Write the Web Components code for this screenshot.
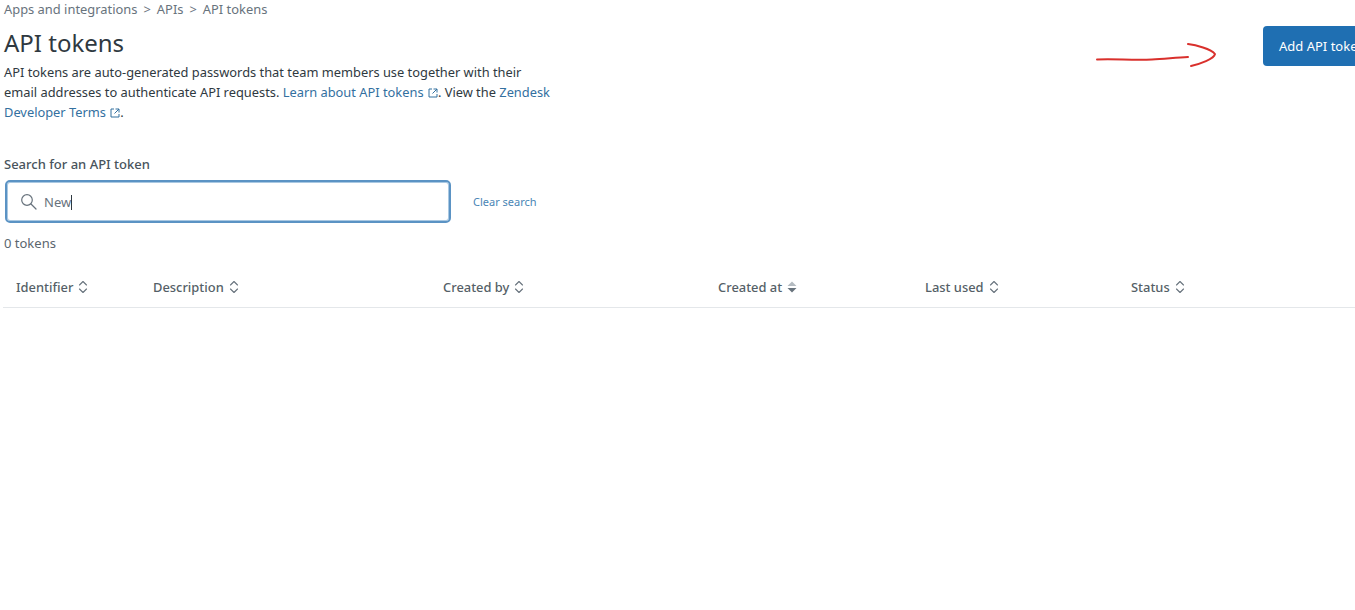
<!DOCTYPE html>
<html>
<head>
<meta charset="utf-8">
<title>API tokens</title>
<style>
  html, body { margin: 0; height: 100%; background: #fff; overflow: hidden; }
  body { font-family: "Noto Sans", "Open Sans", sans-serif; color: #49545c; }
</style>
</head>
<body>
<tokens-page></tokens-page>

<template id="page-tpl">
  <style>
    :host { display: block; width: 1355px; height: 610px; overflow: hidden; padding: 2px 0 0 4px; box-sizing: border-box; }
    .top { display: flex; align-items: flex-start; }
    .intro { width: 556px; flex: none; }
    .arrow { flex: none; margin: 40px 0 0 536px; width: 124px; height: 26px; }
    api-button { margin: 24px 0 0 43px; flex: none; }
    .crumbs { font-size: 12.9px; line-height: 15px; color: #68737d; display: flex; gap: 6px; white-space: nowrap; }
    h1 { margin: 9px 0 0; font-size: 24px; font-weight: 400; line-height: 33px; color: #2f3941; }
    p { margin: 3px 0 0; font-size: 12.85px; line-height: 20px; color: #2f3941; width: 553px; }
    a { color: #33709f; text-decoration: none; }
    .ext { width: 10px; height: 10px; vertical-align: -1px; margin-left: 1px; }
  </style>
  <div class="top">
    <div class="intro">
      <div class="crumbs"><span>Apps and integrations</span><span>&gt;</span><span>APIs</span><span>&gt;</span><span>API tokens</span></div>
      <h1>API tokens</h1>
      <p>API tokens are auto-generated passwords that team members use together with their email addresses to authenticate API requests. <a href="#">Learn about API tokens</a> <svg class="ext" viewBox="0 0 10 10" fill="none" stroke="#33709f" stroke-width="1"><path d="M4 1H1v8h8V6M5.500 1H9v3.500M9 1 4.500 5.500"/></svg>. View the <a href="#">Zendesk</a> <a href="#">Developer Terms</a> <svg class="ext" viewBox="0 0 10 10" fill="none" stroke="#33709f" stroke-width="1"><path d="M4 1H1v8h8V6M5.500 1H9v3.500M9 1 4.500 5.500"/></svg>.</p>
    </div>
    <svg class="arrow" viewBox="0 0 124 26" fill="none" stroke="#d9302c" stroke-width="2" stroke-linecap="round" stroke-linejoin="round">
      <path d="M1 17.500C18 16.500 36 18.500 56 17.500C68 17 80 15.500 92 15"/>
      <path d="M92 2C100 3 115 7 119 12C118 17 104 22 95 24"/>
    </svg>
    <api-button>Add API token</api-button>
  </div>
  <search-box></search-box>
  <token-table></token-table>
</template>

<template id="button-tpl">
  <style>
    :host { display: block; }
    div { width: 108px; height: 40px; box-sizing: border-box; background: #1f6fb2; color: #fff; border-radius: 4px; font-size: 13px; line-height: 40px; padding-left: 16px; white-space: nowrap; overflow: hidden; }
  </style>
  <div><slot></slot></div>
</template>

<template id="search-tpl">
  <style>
    :host { display: block; margin-top: 33px; }
    label { display: block; font-size: 13px; line-height: 18px; font-weight: 500; color: #49545c; }
    .row { display: flex; align-items: center; margin-top: 7px; margin-left: 1px; }
    .field { width: 446px; height: 43px; box-sizing: border-box; border: 2px solid #5b93c4; border-radius: 5px; box-shadow: 0 0 0 1px #a9c8e2 inset; display: flex; align-items: center; padding-left: 13px; gap: 7px; font-size: 13px; color: #68737d; }
    .field svg { width: 17px; height: 17px; flex: none; }
    .caret { display: inline-block; width: 1px; height: 15px; background: #2f3941; vertical-align: -3px; }
    a { margin-left: 22px; font-size: 11px; color: #4a86b5; text-decoration: none; }
    .count { font-size: 13px; line-height: 18px; margin-top: 11px; color: #5b666e; }
  </style>
  <label>Search for an API token</label>
  <div class="row">
    <div class="field">
      <svg viewBox="0 0 17 17" fill="none" stroke="#68737d" stroke-width="1.200"><circle cx="7" cy="7" r="5.300"/><path d="M11 11l5 5" stroke-linecap="round"/></svg>
      <span>New<i class="caret"></i></span>
    </div>
    <a href="#">Clear search</a>
  </div>
  <div class="count">0 tokens</div>
</template>

<template id="table-tpl">
  <style>
    :host { display: grid; box-sizing: border-box; grid-template-columns: 137px 290px 275px 207px 206px 1fr; margin: 14px 0 0 -1px; padding-left: 13px; height: 42px; align-items: center; border-bottom: 1px solid #e4e7ea; }
  </style>
  <sort-head>Identifier</sort-head>
  <sort-head>Description</sort-head>
  <sort-head>Created by</sort-head>
  <sort-head sorted>Created at</sort-head>
  <sort-head>Last used</sort-head>
  <sort-head>Status</sort-head>
</template>

<template id="head-tpl">
  <style>
    :host { display: flex; align-items: center; gap: 5px; font-size: 12.9px; font-weight: 500; color: #555f67; white-space: nowrap; }
    svg { width: 10px; height: 14px; }
  </style>
  <slot></slot>
  <svg viewBox="0 0 10 14" fill="none" stroke="#68737d" stroke-width="1.100" stroke-linecap="round" stroke-linejoin="round"><path d="M1.500 5 5 1.500 8.500 5M1.500 9 5 12.500 8.500 9"/></svg>
</template>

<template id="head-sorted-tpl">
  <style>
    :host { display: flex; align-items: center; gap: 5px; font-size: 12.9px; font-weight: 500; color: #555f67; white-space: nowrap; }
    svg { width: 10px; height: 14px; }
  </style>
  <slot></slot>
  <svg viewBox="0 0 10 14"><path d="M.5 6 5 1.500 9.500 6z" fill="#b4bbc1"/><path d="M.5 8 5 12.500 9.500 8z" fill="#68737d"/></svg>
</template>

<script>
  function fromTemplate(el, id) {
    el.attachShadow({ mode: "open" }).appendChild(document.getElementById(id).content.cloneNode(true));
  }

  class TokensPage extends HTMLElement {
    constructor() { super(); fromTemplate(this, "page-tpl"); }
  }
  class ApiButton extends HTMLElement {
    constructor() { super(); fromTemplate(this, "button-tpl"); }
  }
  class SearchBox extends HTMLElement {
    constructor() { super(); fromTemplate(this, "search-tpl"); }
  }
  class TokenTable extends HTMLElement {
    constructor() { super(); fromTemplate(this, "table-tpl"); }
  }
  class SortHead extends HTMLElement {
    connectedCallback() {
      if (!this.shadowRoot) fromTemplate(this, this.hasAttribute("sorted") ? "head-sorted-tpl" : "head-tpl");
    }
  }

  customElements.define("api-button", ApiButton);
  customElements.define("search-box", SearchBox);
  customElements.define("sort-head", SortHead);
  customElements.define("token-table", TokenTable);
  customElements.define("tokens-page", TokensPage);
</script>
</body>
</html>
